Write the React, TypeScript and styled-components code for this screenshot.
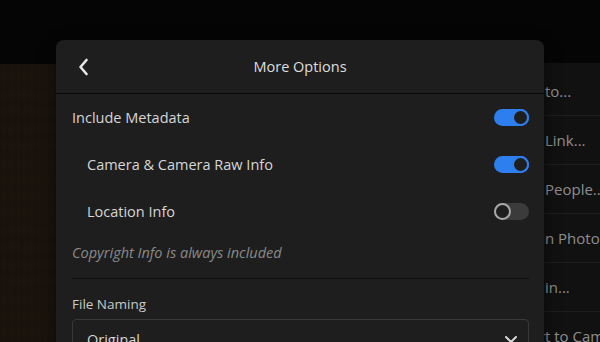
import React from "react";
import styled, { createGlobalStyle } from "styled-components";

const GlobalStyle = createGlobalStyle`
  html, body { margin: 0; padding: 0; background: #050505; }
  body { font-family: "Open Sans", "Noto Sans", sans-serif; overflow: hidden; }
  * { box-sizing: border-box; }
`;

const Page = styled.div`
  position: relative;
  width: 600px;
  height: 342px;
  overflow: hidden;
  display: flex;
  flex-direction: column;
  background: #040404;
`;

const TopBar = styled.div`
  height: 63px;
  flex: none;
  background: #040504;
`;

const Stage = styled.div`
  flex: 1;
  display: flex;
  min-height: 0;
`;

const Wood = styled.div`
  flex: 1;
  margin-top: 1px;
  background:
    repeating-linear-gradient(90deg, rgba(0,0,0,0.10) 0px, rgba(0,0,0,0) 2px, rgba(40,28,16,0.10) 4px, rgba(0,0,0,0) 7px),
    repeating-linear-gradient(0deg, rgba(0,0,0,0.08) 0px, rgba(0,0,0,0) 9px, rgba(0,0,0,0.06) 17px),
    #1a130c;
`;

const SideMenu = styled.div`
  width: 200px;
  flex: none;
  background: #111111;
  padding-top: 4px;
  display: flex;
  flex-direction: column;
`;

const MenuItem = styled.div`
  height: 49px;
  flex: none;
  display: grid;
  grid-template-columns: 145px auto;
  align-items: center;
  border-bottom: 1px solid #1d1d1d;
  color: #8e8e8e;
  font-size: 15px;
  white-space: nowrap;
`;

const MenuPrefix = styled.span`
  text-align: right;
  overflow: hidden;
`;

const Dialog = styled.div`
  position: absolute;
  left: 56px;
  top: 40px;
  width: 488px;
  height: 330px;
  background: #1e1e1e;
  border-radius: 8px;
  box-shadow: 0 4px 16px rgba(0, 0, 0, 0.5);
  display: flex;
  flex-direction: column;
`;

const Header = styled.div`
  height: 54px;
  flex: none;
  display: grid;
  grid-template-columns: 48px 1fr 48px;
  align-items: center;
  border-bottom: 1px solid #0a0a0a;
`;

const BackButton = styled.button`
  background: none;
  border: none;
  padding: 0 0 0 22px;
  height: 100%;
  display: flex;
  align-items: center;
  cursor: pointer;
`;

const Title = styled.div`
  text-align: center;
  color: #dedede;
  font-size: 14.5px;
  margin-top: -1px;
`;

const Content = styled.div`
  padding: 0 15px 0 16px;
  display: flex;
  flex-direction: column;
`;

const Row = styled.div<{ $indent?: boolean }>`
  height: 47px;
  display: flex;
  align-items: center;
  justify-content: space-between;
  padding-left: ${(p) => (p.$indent ? "15px" : "0")};
  color: #d6d6d6;
  font-size: 14.5px;
`;

const Track = styled.div<{ $on: boolean }>`
  position: relative;
  width: 35px;
  height: 17px;
  border-radius: 9px;
  background: ${(p) => (p.$on ? "#2d7ff0" : "#3b3b3b")};
`;

const Knob = styled.div<{ $on: boolean }>`
  position: absolute;
  top: 0;
  left: ${(p) => (p.$on ? "18px" : "0")};
  width: 17px;
  height: 17px;
  border-radius: 50%;
  background: #1e1e1e;
  border: 2px solid ${(p) => (p.$on ? "#2d7ff0" : "#a8a8a8")};
`;

const Note = styled.div`
  margin-top: 8px;
  line-height: 20px;
  font-size: 14.5px;
  font-style: italic;
  color: #8a8a8a;
`;

const Divider = styled.div`
  height: 1px;
  background: #0e0e0e;
  margin: 15px 0 15px;
`;

const Label = styled.div`
  line-height: 20px;
  font-size: 13.5px;
  color: #c9c9c9;
`;

const Select = styled.div`
  margin-top: 5px;
  height: 40px;
  border: 1px solid #383838;
  border-radius: 4px;
  display: flex;
  align-items: center;
  justify-content: space-between;
  padding: 0 10px 0 14px;
  color: #d6d6d6;
  font-size: 14.5px;
`;

function Toggle({ on }: { on: boolean }) {
  return (
    <Track $on={on}>
      <Knob $on={on} />
    </Track>
  );
}

const menu: [string, string][] = [
  ["Share ", "to..."],
  ["Get ", "Link..."],
  ["Invite ", "People..."],
  ["Edit i", "n Photos"],
  ["Open ", "in..."],
  ["Expor", "t to Camera Roll"],
];

export default function App() {
  return (
    <>
      <GlobalStyle />
      <Page>
        <TopBar />
        <Stage>
          <Wood />
          <SideMenu>
            {menu.map(([a, b]) => (
              <MenuItem key={a + b}>
                <MenuPrefix>{a.replace(/ $/, "\u00a0")}</MenuPrefix>
                <span>{b}</span>
              </MenuItem>
            ))}
          </SideMenu>
        </Stage>
        <Dialog>
          <Header>
            <BackButton aria-label="Back">
              <svg width="11" height="18" viewBox="0 0 11 18">
                <path d="M8.5 2 L2.5 9 L8.5 16" fill="none" stroke="#e6e6e6" strokeWidth="2.6" strokeLinecap="round" strokeLinejoin="round" />
              </svg>
            </BackButton>
            <Title>More Options</Title>
            <div />
          </Header>
          <Content>
            <Row>
              Include Metadata
              <Toggle on />
            </Row>
            <Row $indent>
              Camera &amp; Camera Raw Info
              <Toggle on />
            </Row>
            <Row $indent>
              Location Info
              <Toggle on={false} />
            </Row>
            <Note>Copyright Info is always included</Note>
            <Divider />
            <Label>File Naming</Label>
            <Select>
              Original
              <svg width="14" height="9" viewBox="0 0 14 9">
                <path d="M2 2 L7 7 L12 2" fill="none" stroke="#d6d6d6" strokeWidth="2" strokeLinecap="round" strokeLinejoin="round" />
              </svg>
            </Select>
          </Content>
        </Dialog>
      </Page>
    </>
  );
}
